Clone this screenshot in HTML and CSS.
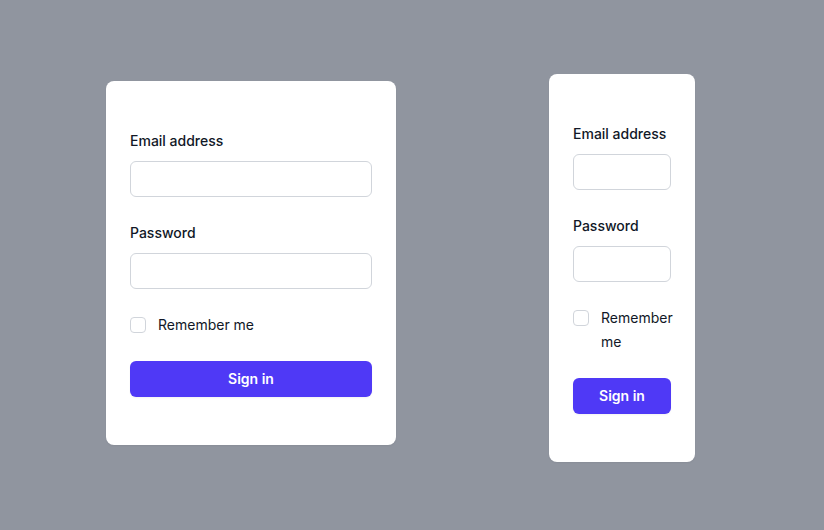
FILE: index.html
```html
<!DOCTYPE html>
<html lang="en">
<head>
<meta charset="utf-8">
<title>Sign in</title>
<link rel="stylesheet" href="styles.css">
</head>
<body>
<main class="stage">
  <form class="card card-wide">
    <div class="field">
      <label class="label">Email address</label>
      <div class="input"></div>
    </div>
    <div class="field">
      <label class="label">Password</label>
      <div class="input"></div>
    </div>
    <div class="check-row">
      <span class="checkbox"></span>
      <span class="check-label">Remember me</span>
    </div>
    <button type="button" class="btn">Sign in</button>
  </form>
  <form class="card card-narrow">
    <div class="field">
      <label class="label">Email address</label>
      <div class="input"></div>
    </div>
    <div class="field">
      <label class="label">Password</label>
      <div class="input"></div>
    </div>
    <div class="check-row">
      <span class="checkbox"></span>
      <span class="check-label">Remember me</span>
    </div>
    <button type="button" class="btn">Sign in</button>
  </form>
</main>
</body>
</html>
```

FILE: styles.css
```css
* { box-sizing: border-box; }
html, body {
  margin: 0;
  height: 100%;
}
body {
  background: #90959f;
  font-family: Inter, "Noto Sans", sans-serif;
  font-size: 14px;
  line-height: 24px;
  color: #111827;
}
.stage {
  display: flex;
  align-items: flex-start;
  padding-left: 106px;
  gap: 153px;
}
.card {
  background: #fff;
  border-radius: 8px;
  padding: 48px 24px;
  display: flex;
  flex-direction: column;
  gap: 24px;
  box-shadow: 0 1px 2px rgba(0,0,0,0.05);
}
.card-wide {
  width: 290px;
  margin-top: 81px;
}
.card-narrow {
  width: 146px;
  margin-top: 74px;
}
.field {
  display: flex;
  flex-direction: column;
}
.label {
  font-weight: 500;
  display: block;
}
.input {
  margin-top: 8px;
  height: 36px;
  border: 1px solid #d1d5db;
  border-radius: 6px;
  background: #fff;
}
.check-row {
  display: flex;
  align-items: flex-start;
}
.checkbox {
  flex: none;
  width: 16px;
  height: 16px;
  margin-top: 4px;
  border: 1px solid #d1d5db;
  border-radius: 4px;
  background: #fff;
}
.check-label {
  margin-left: 12px;
  color: #111827;
}
.btn {
  height: 36px;
  border: 0;
  border-radius: 6px;
  background: #4f39f6;
  color: #fff;
  font-family: inherit;
  font-size: 14px;
  font-weight: 600;
  line-height: 24px;
  padding: 6px 12px;
  box-shadow: 0 1px 2px rgba(0,0,0,0.05);
}
```
